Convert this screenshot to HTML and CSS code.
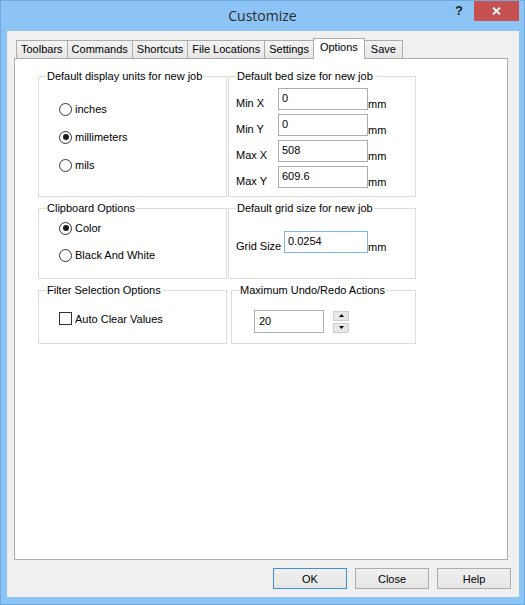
FILE: index.html
```html
<!DOCTYPE html>
<html lang="en">
<head>
  <meta charset="UTF-8">
  <title>Customize</title>
  <link rel="stylesheet" href="styles.css">
</head>
<body>

  <div class="window">

    <!-- Title bar -->
    <div class="titlebar">
      <span></span>
      <div class="title">Customize</div>
      <div class="controls">
        <span class="help">?</span>
        <span class="close">
          <svg width="9" height="8" viewBox="0 0 9 8">
            <path d="M1 0.5 L8 7.5 M8 0.5 L1 7.5" stroke="#fff" stroke-width="1.8" fill="none"/>
          </svg>
        </span>
      </div>
    </div>

    <!-- Client area -->
    <div class="client">
      <div class="tabs">
        <div class="tab">Toolbars</div>
        <div class="tab">Commands</div>
        <div class="tab">Shortcuts</div>
        <div class="tab">File Locations</div>
        <div class="tab">Settings</div>
        <div class="tab active">Options</div>
        <div class="tab">Save</div>
      </div>

      <div class="panel">
        <div class="groups">

          <div class="group units">
            <span class="caption">Default display units for new job</span>
            <div class="body">
              <div class="radio"><span class="mark"></span>inches</div>
              <div class="radio checked"><span class="mark"></span>millimeters</div>
              <div class="radio"><span class="mark"></span>mils</div>
            </div>
          </div>

          <div class="group bed">
            <span class="caption">Default bed size for new job</span>
            <div class="body">
              <div class="field"><span class="lbl">Min X</span><div class="input">0</div><span class="unit">mm</span></div>
              <div class="field"><span class="lbl">Min Y</span><div class="input">0</div><span class="unit">mm</span></div>
              <div class="field"><span class="lbl">Max X</span><div class="input">508</div><span class="unit">mm</span></div>
              <div class="field"><span class="lbl">Max Y</span><div class="input">609.6</div><span class="unit">mm</span></div>
            </div>
          </div>

          <div class="group clip">
            <span class="caption">Clipboard Options</span>
            <div class="body">
              <div class="radio checked"><span class="mark"></span>Color</div>
              <div class="radio"><span class="mark"></span>Black And White</div>
            </div>
          </div>

          <div class="group grid-size">
            <span class="caption">Default grid size for new job</span>
            <div class="body">
              <div class="field"><span class="lbl grid-lbl">Grid Size</span><div class="input grid-input focused">0.0254</div><span class="unit">mm</span></div>
            </div>
          </div>

          <div class="group filter">
            <span class="caption">Filter Selection Options</span>
            <div class="body">
              <div class="check"><span class="box"></span>Auto Clear Values</div>
            </div>
          </div>

          <div class="group undo">
            <span class="caption">Maximum Undo/Redo Actions</span>
            <div class="body spin-row">
              <div class="input undo-input">20</div>
              <div class="spinner">
                <span class="spin-btn"><svg width="5" height="3" viewBox="0 0 5 3"><path d="M0 3 L2.5 0 L5 3 Z" fill="#000"/></svg></span>
                <span class="spin-btn"><svg width="5" height="3" viewBox="0 0 5 3"><path d="M0 0 L5 0 L2.5 3 Z" fill="#000"/></svg></span>
              </div>
            </div>
          </div>

        </div>
      </div>

      <div class="buttons">
        <button class="btn default">OK</button>
        <button class="btn">Close</button>
        <button class="btn">Help</button>
      </div>
    </div>

  </div>

</body>
</html>
```

FILE: styles.css
```css
* {
  margin: 0;
  padding: 0;
  box-sizing: border-box;
}
body {
  background-color: #8dc4f6;
  font-family: "Liberation Sans", Arial, sans-serif;
  font-size: 11px;
  color: #000;
}
.window {
  width: 525px;
  height: 605px;
  border: 1px solid #6ea9e0;
  display: flex;
  flex-direction: column;
}

/* Title bar */
.titlebar {
  height: 30px;
  display: grid;
  grid-template-columns: 1fr auto 1fr;
  align-items: start;
}
.title {
  font-family: "Open Sans", sans-serif;
  font-size: 14px;
  line-height: 30px;
  color: #2b2b2b;
}
.controls {
  justify-self: end;
  display: flex;
  align-items: flex-start;
  margin-right: 5px;
}
.help {
  font-weight: bold;
  font-size: 13px;
  line-height: 20px;
  color: #1e1e1e;
  margin-right: 11px;
}
.close {
  width: 45px;
  height: 20px;
  background-color: #c75050;
  display: flex;
  align-items: center;
  justify-content: center;
}

/* Client area */
.client {
  margin-left: 6px;
  width: 512px;
  height: 566px;
  background-color: #f0f0f0;
  padding: 7px 11px 8px 7px;
  display: flex;
  flex-direction: column;
}
.tabs {
  display: flex;
  align-items: flex-end;
  height: 21px;
  margin-left: 2px;
  margin-bottom: -1px;
  position: relative;
  z-index: 1;
}
.tab {
  height: 18px;
  margin-bottom: 1px;
  margin-right: -1px;
  padding: 0 4px;
  line-height: 17px;
  border: 1px solid #acacac;
  border-bottom: none;
  background: linear-gradient(#f3f3f3, #e6e6e6);
  white-space: nowrap;
}
.tab:last-child {
  padding: 0 6px;
}
.tab.active {
  height: 21px;
  margin-bottom: 0;
  padding: 0 6px;
  background: #fff;
  line-height: 16px;
  position: relative;
  z-index: 2;
}
.panel {
  flex: 1;
  background-color: #fff;
  border: 1px solid #acacac;
}

/* Group boxes */
.groups {
  display: grid;
  grid-template-columns: 189px 188px;
  grid-template-rows: 121px 71px 54px;
  column-gap: 1px;
  row-gap: 11px;
  padding: 17px 0 0 23px;
}
.group {
  border: 1px solid #dcdcdc;
  display: flex;
  flex-direction: column;
  align-items: flex-start;
}
.caption {
  margin: -7px 0 0 7px;
  padding: 0 1px;
  line-height: 13px;
  background: #fff;
  white-space: nowrap;
}
.units .body {
  padding: 12px 0 0 20px;
}
.clip .body {
  padding: 0 0 0 20px;
}
.radio {
  display: flex;
  align-items: center;
  height: 28px;
}
.clip .radio {
  height: 26px;
  margin-bottom: 1px;
}
.mark {
  width: 13px;
  height: 13px;
  border: 1px solid #333;
  border-radius: 50%;
  background: #fff;
  margin-right: 3px;
  display: flex;
  align-items: center;
  justify-content: center;
}
.radio.checked .mark::after {
  content: "";
  width: 6px;
  height: 6px;
  border-radius: 50%;
  background: #1a1a1a;
}

/* Text fields */
.bed .body {
  padding: 5px 0 0 7px;
}
.grid-size .body {
  padding: 16px 0 0 7px;
}
.field {
  display: flex;
  align-items: flex-end;
  height: 22px;
  margin-bottom: 4px;
}
.lbl {
  width: 42px;
  line-height: 13px;
}
.grid-lbl {
  width: 48px;
}
.unit {
  line-height: 12px;
}
.input {
  width: 90px;
  height: 22px;
  border: 1px solid #abadb3;
  background: #fff;
  padding-left: 3px;
  line-height: 19px;
}
.grid-input {
  width: 84px;
}
.focused {
  border-color: #7eb4ea;
}

/* Checkbox */
.filter .body {
  padding: 15px 0 0 20px;
}
.check {
  display: flex;
  align-items: center;
  height: 13px;
}
.box {
  width: 13px;
  height: 13px;
  border: 1px solid #333;
  background: #fff;
  margin-right: 3px;
}

/* Spinner */
.undo {
  margin-left: 3px;
}
.spin-row {
  display: flex;
  align-items: center;
  padding: 13px 0 0 22px;
}
.undo-input {
  width: 70px;
  height: 23px;
  padding-left: 4px;
  line-height: 20px;
}
.spinner {
  margin-left: 9px;
  display: flex;
  flex-direction: column;
  gap: 2px;
}
.spin-btn {
  width: 16px;
  height: 10px;
  background: #e8e8e8;
  border: 1px solid #cfcfcf;
  display: flex;
  align-items: center;
  justify-content: center;
}

/* Dialog buttons */
.buttons {
  display: flex;
  justify-content: flex-end;
  gap: 8px;
  margin-top: 8px;
  margin-right: -3px;
}
.btn {
  width: 74px;
  height: 21px;
  font-family: "Liberation Sans", Arial, sans-serif;
  font-size: 11px;
  color: #000;
  background: linear-gradient(#f0f0f0, #e5e5e5);
  border: 1px solid #acacac;
}
.btn.default {
  border-color: #3c8fe4;
}
```
